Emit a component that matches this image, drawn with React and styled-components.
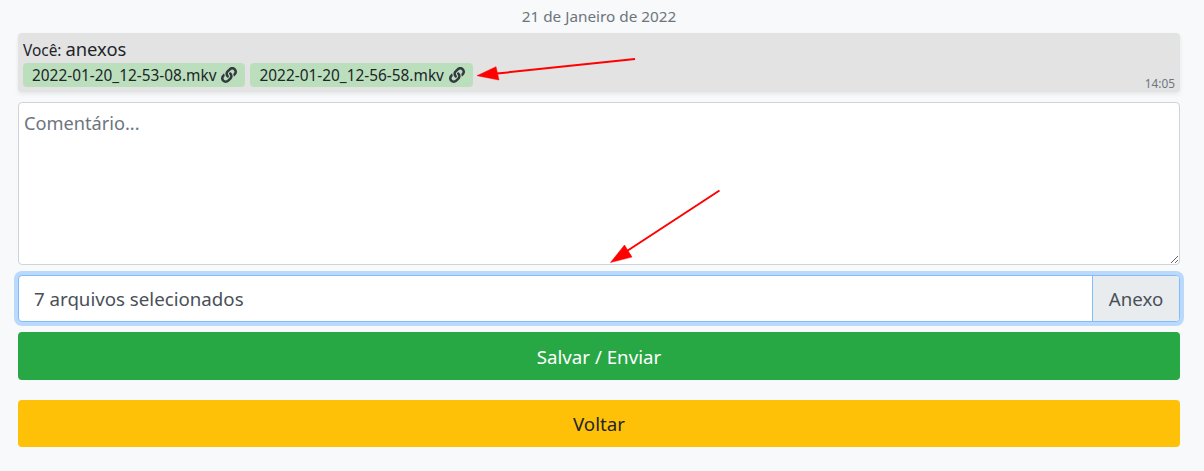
import React from 'react';
import styled, {createGlobalStyle} from "styled-components";
import {FaLink} from "react-icons/fa";

const GlobalStyle = createGlobalStyle`
    html, body {
        margin: 0;
        padding: 0;
        background: #f8f9fa;
        font-family: "Noto Sans", "Open Sans", sans-serif;
        color: #212529;
        overflow: hidden;
    }
`;

const Page = styled.div`
    position: relative;
    width: 1204px;
    height: 471px;
    box-sizing: border-box;
    padding: 0 24px 0 18px;
    display: flex;
    flex-direction: column;
`;

const TopCard = styled.div`
    height: 0;
    box-shadow: 0 1px 4px rgba(0, 0, 0, .12);
`;

const DateLabel = styled.div`
    height: 33px;
    line-height: 32px;
    text-align: center;
    font-size: 15.3px;
    color: #6c757d;
`;

const Message = styled.div`
    position: relative;
    height: 59px;
    box-sizing: border-box;
    padding: 6px 5px 0;
    background: #e3e3e3;
    border-radius: 4px;
    box-shadow: 0 2px 4px rgba(0, 0, 0, .08);
`;

const Sender = styled.div`
    height: 24px;
    line-height: 20px;
    font-size: 15.4px;
    color: #212529;
`;

const Body = styled.span`
    font-size: 18.4px;
`;

const Attachments = styled.div`
    display: flex;
    gap: 5px;
`;

const Attachment = styled.a`
    display: flex;
    align-items: center;
    gap: 5px;
    height: 24px;
    padding: 0 8px 0 9px;
    background: #bbdfbd;
    border-radius: 4px;
    font-size: 15.4px;
    color: #212529;
    svg {
        color: #343a40;
        font-size: 16px;
    }
`;

const Time = styled.span`
    position: absolute;
    right: 5px;
    bottom: 1px;
    font-size: 11.8px;
    color: #6c757d;
`;

const Comment = styled.textarea`
    display: block;
    height: 163px;
    margin-top: 10px;
    box-sizing: border-box;
    padding: 8px 5px;
    background: #fff;
    border: 1px solid #ced4da;
    border-radius: 4px;
    font-family: inherit;
    font-size: 18.2px;
    line-height: 25px;
    outline: none;
    &::placeholder {
        color: #6c757d;
        opacity: 1;
    }
`;

const FileInput = styled.div`
    display: flex;
    height: 47px;
    margin-top: 10px;
    box-sizing: border-box;
    background: #fff;
    border: 1px solid #80bdff;
    border-radius: 4px;
    box-shadow: 0 0 0 4px rgba(0, 123, 255, .25);
    font-size: 18.7px;
    color: #495057;
    overflow: hidden;
`;

const FileName = styled.div`
    flex: 1;
    padding-left: 15px;
    line-height: 46px;
`;

const FileButton = styled.div`
    width: 86px;
    text-align: center;
    line-height: 46px;
    background: #e9ecef;
    border-left: 1px solid #80bdff;
`;

const Button = styled.button`
    display: block;
    width: 100%;
    height: ${({tall}) => tall ? 48 : 47}px;
    margin-top: ${({gap}) => gap}px;
    padding: 0;
    border: none;
    border-radius: 4px;
    background: ${({bg}) => bg};
    color: ${({fg}) => fg};
    font-family: inherit;
    font-size: 18.7px;
`;

const Arrows = styled.svg`
    position: absolute;
    top: 0;
    left: 0;
    pointer-events: none;
`;

const App = () => (
    <Page>
        <GlobalStyle/>
        <TopCard/>
        <DateLabel>21 de Janeiro de 2022</DateLabel>
        <Message>
            <Sender>Você: <Body>anexos</Body></Sender>
            <Attachments>
                <Attachment>2022-01-20_12-53-08.mkv <FaLink/></Attachment>
                <Attachment>2022-01-20_12-56-58.mkv <FaLink/></Attachment>
            </Attachments>
            <Time>14:05</Time>
        </Message>
        <Comment placeholder="Comentário..."/>
        <FileInput>
            <FileName>7 arquivos selecionados</FileName>
            <FileButton>Anexo</FileButton>
        </FileInput>
        <Button tall gap={10} bg="#28a745" fg="#fff">Salvar / Enviar</Button>
        <Button gap={20} bg="#ffc107" fg="#212529">Voltar</Button>
        <Arrows width="1204" height="471">
            <g fill="#ff0000" stroke="#ff0000">
                <line x1="635" y1="59" x2="497" y2="73.5" strokeWidth="2"/>
                <polygon points="477,75.7 496,66.7 499,80" strokeWidth="0.5"/>
                <line x1="719.5" y1="190.5" x2="627" y2="251" strokeWidth="2"/>
                <polygon points="610.5,262.5 624.5,245 632,257" strokeWidth="0.5"/>
            </g>
        </Arrows>
    </Page>
);

export default App;
